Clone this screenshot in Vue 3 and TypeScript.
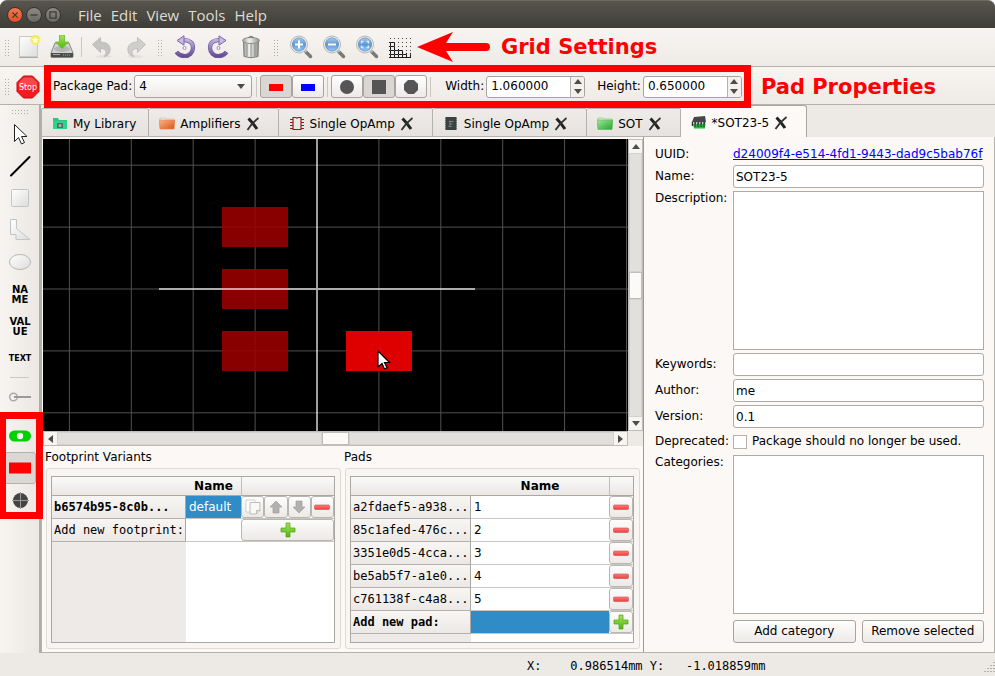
<script setup lang="ts">
import { ref } from 'vue'

interface Tab { title: string; icon: string; closable: boolean }
interface Pad { id: string; name: string }

const menus = ['File', 'Edit', 'View', 'Tools', 'Help']

const tabs: Tab[] = [
  { title: 'My Library', icon: 'library', closable: false },
  { title: 'Amplifiers', icon: 'orange', closable: true },
  { title: 'Single OpAmp', icon: 'symbol', closable: true },
  { title: 'Single OpAmp', icon: 'component', closable: true },
  { title: 'SOT', icon: 'green', closable: true },
  { title: '*SOT23-5', icon: 'package', closable: true },
]
const activeTab = ref(5)

const pads: Pad[] = [
  { id: 'a2fdaef5-a938...', name: '1' },
  { id: '85c1afed-476c...', name: '2' },
  { id: '3351e0d5-4cca...', name: '3' },
  { id: 'be5ab5f7-a1e0...', name: '4' },
  { id: 'c761138f-c4a8...', name: '5' },
]

const packagePad = ref('4')
const padWidth = ref('1.060000')
const padHeight = ref('0.650000')
const name = ref('SOT23-5')
const description = ref('')
const keywords = ref('')
const author = ref('me')
const version = ref('0.1')
const deprecated = ref(false)
const coordinates = 'X:    0.986514mm Y:   -1.018859mm'

const gridStep = 61.9
const gridX = [-4, -3, -2, -1, 1, 2, 3, 4, 5].map((n) => n * gridStep)
const gridY = [-2, -1, 0, 1, 2].map((n) => n * gridStep)
const leftPadRows = [-82, -20, 42]

function step(value: string, delta: number): string {
  return (Number(value) + delta).toFixed(6)
}
</script>

<template>
  <div class="window">
    <svg class="defs" width="0" height="0" aria-hidden="true">
      <defs>
        <linearGradient id="paper" x1="0" y1="0" x2="1" y2="1">
          <stop offset="0" stop-color="#ffffff" /><stop offset="1" stop-color="#dcdedb" />
        </linearGradient>
        <linearGradient id="metal" x1="0" y1="0" x2="1" y2="0">
          <stop offset="0" stop-color="#9b9d98" /><stop offset=".4" stop-color="#f2f3f0" /><stop offset="1" stop-color="#8f918c" />
        </linearGradient>
        <linearGradient id="greenFill" x1="0" y1="0" x2="0" y2="1">
          <stop offset="0" stop-color="#a5e55c" /><stop offset="1" stop-color="#4fb80d" />
        </linearGradient>
        <linearGradient id="purple" x1="0" y1="0" x2="0" y2="1">
          <stop offset="0" stop-color="#c0b2dc" /><stop offset="1" stop-color="#644e96" />
        </linearGradient>
        <linearGradient id="lens" x1="0" y1="0" x2="0" y2="1">
          <stop offset="0" stop-color="#a9caec" /><stop offset=".5" stop-color="#5c97d6" /><stop offset="1" stop-color="#9ccaf4" />
        </linearGradient>
        <linearGradient id="orangeFill" x1="0" y1="0" x2="1" y2="1">
          <stop offset="0" stop-color="#f6b98a" /><stop offset="1" stop-color="#dd5310" />
        </linearGradient>
        <linearGradient id="folderGreen" x1="0" y1="0" x2="1" y2="1">
          <stop offset="0" stop-color="#a2e79d" /><stop offset="1" stop-color="#23a32a" />
        </linearGradient>
        <linearGradient id="redFill" x1="0" y1="0" x2="0" y2="1">
          <stop offset="0" stop-color="#ff7b7b" /><stop offset="1" stop-color="#f23c3c" />
        </linearGradient>
      </defs>
    </svg>

    <header class="titlebar">
      <div class="controls">
        <button class="control close" aria-label="Close">
          <svg viewBox="0 0 16 16"><path d="M5 5l6 6m0-6l-6 6" /></svg>
        </button>
        <button class="control" aria-label="Minimize">
          <svg viewBox="0 0 16 16"><path d="M4 8h8" /></svg>
        </button>
        <button class="control" aria-label="Maximize">
          <svg viewBox="0 0 16 16"><path d="M4.500 4.500h7v7h-7z" /></svg>
        </button>
      </div>
      <nav class="menu">
        <button v-for="m in menus" :key="m">{{ m }}</button>
      </nav>
    </header>

    <div class="toolbar main-tools">
      <span class="grip first"></span>
      <button class="tool" aria-label="New">
        <svg viewBox="0 0 24 24">
          <path d="M2.500 1.500h18v20h-18z" fill="url(#paper)" stroke="#c9c9c6" />
          <path d="M2 22.500h19" stroke="#a9aaa6" />
          <circle cx="18.500" cy="5" r="5" fill="#f6ee3c" opacity=".75" />
          <path d="M18.500 1.500l1 2.300 2.500.2-1.800 1.700.6 2.600-2.300-1.400-2.300 1.400.6-2.600L15 4l2.500-.2z" fill="#fffde0" />
        </svg>
      </button>
      <button class="tool" aria-label="Save">
        <svg viewBox="0 0 24 24">
          <path d="M5 8h14l4 10v4H1v-4z" fill="#d2d3d0" stroke="#858783" />
          <path d="M1 18h22v3.500q0 1-1 1H2q-1 0-1-1z" fill="#4c4e4c" />
          <path d="M3 19.500h7" stroke="#a7a9a6" /><path d="M13 20h8" stroke="#777" stroke-dasharray="1 1" stroke-width="2" />
          <ellipse cx="12" cy="14" rx="8" ry="3" fill="#b5b7b4" />
          <path d="M9.500 0h5v7h4L12 13.500 5.500 7h4z" fill="url(#greenFill)" stroke="#6cbb2c" stroke-width=".8" />
        </svg>
      </button>
      <span class="separator"></span>
      <button class="tool" aria-label="Undo">
        <svg viewBox="0 0 24 24">
          <ellipse cx="14" cy="21.500" rx="8" ry="1.500" fill="#e3e0dd" />
          <path d="M2.500 9.500l8-7v4.500c7 0 10.500 4 9.500 9-.5 3-2.500 5-6 5.500 3.500-3.500 2.500-8-3.500-8v4z" fill="#c5c4c2" stroke="#b7b6b4" stroke-width=".8" />
        </svg>
      </button>
      <button class="tool" aria-label="Redo">
        <svg viewBox="0 0 24 24">
          <ellipse cx="12" cy="21.500" rx="8" ry="1.500" fill="#e3e0dd" />
          <path d="M22.500 9.500l-8-7v4.500C7.500 7 4 11 5 16c.5 3 2.500 5 6 5.500-3.500-3.500-2.500-8 3.500-8v4z" fill="#d0cfcd" stroke="#b7b6b4" stroke-width=".8" />
        </svg>
      </button>
      <span class="grip"></span>
      <button class="tool" aria-label="Rotate counterclockwise">
        <svg viewBox="0 0 24 24">
          <path d="M10 5.200C17 4.500 20.200 8.500 20 13c-.2 5-4 8-8 8-4 0-6.500-1-8.500-4" fill="none" stroke="#6b569f" stroke-width="4.200" />
          <path d="M10 5.200C17 4.500 20.200 8.500 20 13c-.2 5-4 8-8 8-4 0-6.500-1-8.500-4" fill="none" stroke="url(#purple)" stroke-width="3" />
          <path d="M4 5.500L11 .8v9.400z" fill="#c6bae0" stroke="#7c68ac" />
          <circle cx="11.500" cy="13" r="1.500" fill="#fff" stroke="#9a8ac0" />
        </svg>
      </button>
      <button class="tool" aria-label="Rotate clockwise">
        <svg viewBox="0 0 24 24">
          <path d="M14 5.200C7 4.500 3.800 8.500 4 13c.2 5 4 8 8 8 4 0 6.500-1 8.500-4" fill="none" stroke="#6b569f" stroke-width="4.200" />
          <path d="M14 5.200C7 4.500 3.800 8.500 4 13c.2 5 4 8 8 8 4 0 6.500-1 8.500-4" fill="none" stroke="url(#purple)" stroke-width="3" />
          <path d="M20 5.500L13 .8v9.400z" fill="#c6bae0" stroke="#7c68ac" />
          <circle cx="12.500" cy="13" r="1.500" fill="#fff" stroke="#9a8ac0" />
        </svg>
      </button>
      <button class="tool" aria-label="Delete">
        <svg viewBox="0 0 24 24">
          <path d="M4.500 6h15l-.5 15.500q-7 2.500-14 0z" fill="url(#metal)" stroke="#7d7f7b" />
          <path d="M8 9v12M12 9v13M16 9v12" stroke="#8b8d89" />
          <ellipse cx="12" cy="5.500" rx="8.500" ry="3" fill="url(#metal)" stroke="#8a8c88" />
          <path d="M9.500 3q2.500-3 5 0" fill="none" stroke="#80827e" stroke-width="1.500" />
        </svg>
      </button>
      <span class="grip"></span>
      <button v-for="z in ['in', 'out', 'all']" :key="z" class="tool" :aria-label="'Zoom ' + z">
        <svg viewBox="0 0 24 24">
          <path d="M17 17l4.500 4.500" stroke="#777a75" stroke-width="3.500" stroke-linecap="round" />
          <path d="M15 14.500l2.500 2.500" stroke="#bbb" stroke-width="2" />
          <circle cx="10" cy="9.500" r="8.500" fill="#eeeeec" stroke="#b5b7b3" />
          <circle cx="10" cy="9.500" r="6.600" fill="url(#lens)" stroke="#5b8cc2" stroke-width=".8" />
          <path v-if="z === 'in'" d="M6 9.500h8M10 5.500v8" stroke="#fff" stroke-width="2" />
          <path v-else-if="z === 'out'" d="M6 9.500h8" stroke="#fff" stroke-width="2" />
          <path v-else d="M6.500 8.500v-2h2M11.500 6.500h2v2M13.500 10.500v2h-2M8.500 12.500h-2v-2" fill="none" stroke="#dceafa" stroke-width="1.300" />
        </svg>
      </button>
      <button class="tool" aria-label="Grid settings">
        <svg viewBox="0 0 24 24" fill="none" stroke="#1c1c1c">
          <path d="M2.500 7v16M6.500 7v16M10.500 14v9M14.500 15v8M18.500 18v5M22.500 18v5M1 7.500h6M1 11.500h6M1 15.500h14M1 19.500h18M1 22.500h22" />
          <path d="M2 3.500h21M2 7.500h21M2 11.500h21M2 15.500h21M2 19.500h21" stroke="#444" stroke-dasharray="1 3" />
        </svg>
      </button>
      <svg class="callout-arrow" viewBox="0 0 74 30" aria-hidden="true">
        <path d="M0 15L36 0l-7 11h40q4 0 4 4t-4 4H29l7 11z" fill="#f00" />
      </svg>
      <strong class="callout">Grid Settings</strong>
    </div>

    <div class="toolbar pad-tools">
      <span class="grip first"></span>
      <button class="tool stop" aria-label="Stop">
        <svg viewBox="0 0 24 24">
          <path d="M7.500 1h9L23 7.500v9L16.500 23h-9L1 16.500v-9z" fill="#f31b1f" stroke="#b31216" />
          <path d="M8 2.500h8l5 5v4Q12 11 3 14V7.500z" fill="#ff6d6d" opacity=".55" />
          <text x="12" y="15" text-anchor="middle">Stop</text>
        </svg>
      </button>
      <div class="properties">
        <label for="package-pad">Package Pad:</label>
        <div class="combo">
          <select id="package-pad" v-model="packagePad">
            <option v-for="p in pads" :key="p.id">{{ p.name }}</option>
          </select>
          <svg viewBox="0 0 8 5"><path d="M0 0h8L4 5z" /></svg>
        </div>
        <span class="separator"></span>
        <div class="segments">
          <button class="pressed" aria-label="Top side"><svg viewBox="0 0 16 16"><path d="M1 5h14v7H1z" fill="#f00" /></svg></button>
          <button aria-label="Bottom side"><svg viewBox="0 0 16 16"><path d="M1 5h14v7H1z" fill="#00f" /></svg></button>
        </div>
        <span class="separator"></span>
        <div class="segments">
          <button aria-label="Round"><svg viewBox="0 0 16 16"><circle cx="8" cy="8" r="7" fill="#555" /></svg></button>
          <button class="pressed" aria-label="Rectangular"><svg viewBox="0 0 16 16"><path d="M1 1h14v14H1z" fill="#555" /></svg></button>
          <button aria-label="Octagonal"><svg viewBox="0 0 16 16"><path d="M5 1h6l4 4v6l-4 4H5l-4-4V5z" fill="#555" /></svg></button>
        </div>
        <span class="separator"></span>
        <label class="spaced" for="pad-width">Width:</label>
        <div class="spin">
          <input id="pad-width" v-model="padWidth" type="text" />
          <div class="arrows">
            <button aria-label="Increase width" @click="padWidth = step(padWidth, 0.1)"><svg viewBox="0 0 8 5"><path d="M0 5h8L4 0z" /></svg></button>
            <button aria-label="Decrease width" @click="padWidth = step(padWidth, -0.1)"><svg viewBox="0 0 8 5"><path d="M0 0h8L4 5z" /></svg></button>
          </div>
        </div>
        <label class="spaced" for="pad-height">Height:</label>
        <div class="spin">
          <input id="pad-height" v-model="padHeight" type="text" />
          <div class="arrows">
            <button aria-label="Increase height" @click="padHeight = step(padHeight, 0.1)"><svg viewBox="0 0 8 5"><path d="M0 5h8L4 0z" /></svg></button>
            <button aria-label="Decrease height" @click="padHeight = step(padHeight, -0.1)"><svg viewBox="0 0 8 5"><path d="M0 0h8L4 5z" /></svg></button>
          </div>
        </div>
      </div>
      <strong class="callout">Pad Properties</strong>
    </div>

    <div class="body">
      <aside class="side-tools">
        <span class="side-grip"></span>
        <button aria-label="Select"><svg viewBox="0 0 24 24"><path d="M6.500 2.500v17l4-4 3 6.500 3-1.500-3-6h5.500z" fill="#fff" stroke="#222" /></svg></button>
        <button aria-label="Draw line"><svg viewBox="0 0 24 24"><path d="M3 21.500L21.500 3" stroke="#000" stroke-width="2" stroke-linecap="round" /></svg></button>
        <button aria-label="Draw rectangle"><svg viewBox="0 0 24 24"><rect x="3.500" y="3.500" width="17" height="17" rx="1" fill="url(#paper)" stroke="#c3c4c6" /></svg></button>
        <button aria-label="Draw polygon"><svg viewBox="0 0 24 24"><path d="M2.500 1.500h6v9l13.500 11H8v-5H2.500z" fill="url(#paper)" stroke="#c3c4c6" /></svg></button>
        <button aria-label="Draw ellipse"><svg viewBox="0 0 24 24"><ellipse cx="12" cy="12" rx="10.500" ry="7.500" fill="url(#paper)" stroke="#b5b6b7" /></svg></button>
        <button class="word">NA<br />ME</button>
        <button class="word">VAL<br />UE</button>
        <button class="word small">TEXT</button>
        <span class="side-separator"></span>
        <button aria-label="Add pin"><svg viewBox="0 0 24 24"><circle cx="5.500" cy="12" r="3.800" fill="none" stroke="#aaa" stroke-width="1.500" /><path d="M6 12h17" stroke="#999" stroke-width="2" /></svg></button>
        <span class="side-separator"></span>
        <button aria-label="Add THT pad"><svg viewBox="0 0 24 24"><rect x="1" y="6.500" width="22" height="11" rx="5.500" fill="#00d100" /><circle cx="12" cy="12" r="3.200" fill="#f4f1ee" /></svg></button>
        <button class="pressed" aria-label="Add SMT pad"><svg viewBox="0 0 24 24"><path d="M1 6.500h22v11H1z" fill="#f00" /></svg></button>
        <button aria-label="Add hole"><svg viewBox="0 0 24 24"><circle cx="12.500" cy="12.500" r="7.500" fill="#444" /><path d="M12.500 4v17M4 12.500h17" stroke="#999" /></svg></button>
        <span class="frame"></span>
      </aside>

      <main class="workspace">
        <div class="tabs" role="tablist">
          <div v-for="(t, i) in tabs" :key="i" class="tab" :class="{ active: i === activeTab }" role="tab" @click="activeTab = i">
            <svg v-if="t.icon === 'library'" viewBox="0 0 16 16"><path d="M1 2h5l1 2h8v2H1z" fill="#2dc585" /><path d="M1 5h14v8H1z" fill="#2bd68a" /><path d="M5 7h6v5H5z" fill="#586a62" /><circle cx="8" cy="9.500" r="1.500" fill="#a7b5ad" /></svg>
            <svg v-else-if="t.icon === 'orange'" viewBox="0 0 16 16"><path d="M1 2h5l1 1h8v3H1z" fill="#eee" stroke="#ccb9ac" stroke-width=".6" /><path d="M0 4h16l-1 9H1z" fill="url(#orangeFill)" stroke="#e28250" stroke-width=".6" /></svg>
            <svg v-else-if="t.icon === 'green'" viewBox="0 0 16 16"><path d="M1 2h5l1 1h8v3H1z" fill="#d7eed5" stroke="#7ac378" stroke-width=".6" /><path d="M0 4h16l-1 9.500H1z" fill="url(#folderGreen)" stroke="#58b957" stroke-width=".6" /></svg>
            <svg v-else-if="t.icon === 'symbol'" viewBox="0 0 16 16" fill="none" stroke="#8e1f1f"><path d="M4 1.500h3q1 1.500 2 0h3v12H4z" stroke-width="1.200" /><path d="M1 3.500h3M1 6.500h3M1 9.500h3M1 12.500h3M12 3.500h3M12 6.500h3M12 9.500h3M12 12.500h3" /></svg>
            <svg v-else-if="t.icon === 'component'" viewBox="0 0 16 16"><path d="M2.500 1h11v13h-11z" fill="#3a4242" /><path d="M2.500 2v12M13.500 2v12" stroke="#69706f" stroke-dasharray="1 1" /><path d="M6 5.500h4.500M6.500 8h3M7 4.500v5.500M5.500 10.500h3" stroke="#889090" stroke-width=".8" fill="none" /></svg>
            <svg v-else viewBox="0 0 16 16"><path d="M3 2l11-1 1 6H1z" fill="#454847" /><path d="M1.500 7v4M4.500 7v4M7.500 7v4M10.500 7v4M13.500 7v4" stroke="#333" stroke-width="1.500" /><path d="M2 9h12v4.500H3z" fill="#13c32b" /><path d="M4 7v5M7 7v5M10 7v5M13 7v5" stroke="#3c4240" stroke-width="1.300" /></svg>
            <span>{{ t.title }}</span>
            <button v-if="t.closable" class="tab-close" aria-label="Close tab"><svg viewBox="0 0 14 14"><path d="M2.500 1.500Q7 6 11 12" stroke="#222" stroke-width="3" fill="none" /><path d="M12.500 1Q6 6 1.500 13" stroke="#333" stroke-width="1.800" fill="none" /></svg></button>
          </div>
        </div>

        <div class="pane">
          <section class="editor">
            <div class="canvas-area">
              <svg class="canvas" viewBox="-274 -150 585 292" preserveAspectRatio="xMidYMid slice" role="img" aria-label="Footprint">
                <rect x="-1000" y="-1000" width="2000" height="2000" fill="#000" />
                <g stroke="#515151" stroke-width="1">
                  <path v-for="x in gridX" :key="'x' + x" :d="`M${x} -900V900`" />
                  <path v-for="y in gridY" :key="'y' + y" :d="`M-900 ${y}H900`" />
                </g>
                <rect v-for="y in leftPadRows" :key="y" x="-95" :y="y" width="66" height="40" fill="#9c0000" fill-opacity=".88" />
                <rect x="29" y="42" width="66" height="40" fill="#e20000" fill-opacity=".98" />
                <path d="M0 -900V900M-158 0H158" stroke="#fff" stroke-opacity=".62" stroke-width="2" />
                <path d="M61 62v16l4-3.500 2.500 5.500 2.500-1.200-2.500-5.300h5z" fill="#fff" stroke="#000" stroke-width="1.200" />
              </svg>
              <div class="scroll vertical">
                <span class="scroll-button"><svg viewBox="0 0 8 5"><path d="M0 5h8L4 0z" /></svg></span>
                <span class="track"></span><span class="thumb"></span><span class="track"></span>
                <span class="scroll-button"><svg viewBox="0 0 8 5"><path d="M0 0h8L4 5z" /></svg></span>
              </div>
              <div class="scroll horizontal">
                <span class="scroll-button"><svg class="tall" viewBox="0 0 5 8"><path d="M5 0v8L0 4z" /></svg></span>
                <span class="track"></span><span class="thumb"></span><span class="track"></span>
                <span class="scroll-button"><svg class="tall" viewBox="0 0 5 8"><path d="M0 0v8l5-4z" /></svg></span>
              </div>
              <span class="corner"></span>
            </div>

            <div class="lists">
              <section class="group">
                <h2>Footprint Variants</h2>
                <div class="group-box">
                  <div class="table-box variants">
                    <table>
                      <colgroup><col class="id" /><col class="label" /><col /></colgroup>
                      <thead><tr><th></th><th>Name</th><th></th></tr></thead>
                      <tbody>
                        <tr>
                          <th class="bold">b6574b95-8c0b...</th>
                          <td class="selected">default</td>
                          <td class="actions"><div>
                            <button aria-label="Copy"><svg viewBox="0 0 16 16"><path d="M1 1h9v12H1z" fill="#fff" stroke="#c6c6c3" stroke-width=".8" /><path d="M5 3.500h10v8l-3.500 3.500H5z" fill="#f8f8f7" stroke="#bdbdba" /><path d="M15 11.500h-3.500V15" fill="#ddd" stroke="#bbb" /></svg></button>
                            <button aria-label="Up"><svg viewBox="0 0 16 16"><path d="M8 2l6 6h-3v6H5V8H2z" fill="#b2b1af" stroke="#a2a19f" stroke-width=".7" /></svg></button>
                            <button aria-label="Down"><svg viewBox="0 0 16 16"><path d="M8 14l6-6h-3V2H5v6H2z" fill="#b2b1af" stroke="#a2a19f" stroke-width=".7" /></svg></button>
                            <button aria-label="Remove"><svg viewBox="0 0 16 16"><rect x=".5" y="6" width="15" height="4.500" rx="1" fill="url(#redFill)" stroke="#c95050" stroke-width=".6" /></svg></button>
                          </div></td>
                        </tr>
                        <tr>
                          <th>Add new footprint:</th>
                          <td></td>
                          <td class="actions"><div>
                            <button aria-label="Add footprint"><svg viewBox="0 0 16 16"><path d="M6 1h4v5h5v4h-5v5H6v-5H1V6h5z" fill="url(#greenFill)" stroke="#4ea013" stroke-width=".7" /></svg></button>
                          </div></td>
                        </tr>
                      </tbody>
                    </table>
                  </div>
                </div>
              </section>

              <section class="group">
                <h2>Pads</h2>
                <div class="group-box">
                  <div class="table-box pads">
                    <table>
                      <colgroup><col class="id" /><col /><col class="action" /></colgroup>
                      <thead><tr><th></th><th>Name</th><th></th></tr></thead>
                      <tbody>
                        <tr v-for="p in pads" :key="p.id">
                          <th>{{ p.id }}</th>
                          <td>{{ p.name }}</td>
                          <td class="actions"><div>
                            <button :aria-label="'Remove pad ' + p.name"><svg viewBox="0 0 16 16"><rect x=".5" y="6" width="15" height="4.500" rx="1" fill="url(#redFill)" stroke="#c95050" stroke-width=".6" /></svg></button>
                          </div></td>
                        </tr>
                        <tr>
                          <th class="bold">Add new pad:</th>
                          <td class="selected"></td>
                          <td class="actions"><div>
                            <button aria-label="Add pad"><svg viewBox="0 0 16 16"><path d="M6 1h4v5h5v4h-5v5H6v-5H1V6h5z" fill="url(#greenFill)" stroke="#4ea013" stroke-width=".7" /></svg></button>
                          </div></td>
                        </tr>
                      </tbody>
                    </table>
                  </div>
                </div>
              </section>
            </div>
          </section>

          <form class="details" @submit.prevent>
            <span class="caption">UUID:</span>
            <a href="#">d24009f4-e514-4fd1-9443-dad9c5bab76f</a>
            <label for="name">Name:</label>
            <input id="name" v-model="name" type="text" />
            <label class="top" for="description">Description:</label>
            <textarea id="description" v-model="description"></textarea>
            <label for="keywords">Keywords:</label>
            <input id="keywords" v-model="keywords" type="text" />
            <label for="author">Author:</label>
            <input id="author" v-model="author" type="text" />
            <label for="version">Version:</label>
            <input id="version" v-model="version" type="text" />
            <span class="caption">Deprecated:</span>
            <label class="check"><input v-model="deprecated" type="checkbox" />Package should no longer be used.</label>
            <label class="top" for="categories">Categories:</label>
            <select id="categories" multiple></select>
            <div class="form-buttons">
              <button type="button">Add category</button>
              <button type="button">Remove selected</button>
            </div>
          </form>
        </div>
      </main>
    </div>

    <footer class="statusbar">
      <span>{{ coordinates }}</span>
      <svg viewBox="0 0 12 12"><path d="M10 1.500h2M7 4.500h2M10 4.500h2M4 7.500h2M7 7.500h2M10 7.500h2M1 10.500h2M4 10.500h2M7 10.500h2M10 10.500h2" stroke="#b5b1ad" /></svg>
    </footer>
  </div>
</template>

<style>
body { margin: 0; background: #fff; }
</style>

<style scoped>
* { box-sizing: border-box; }
.window {
  display: flex;
  flex-direction: column;
  min-height: 100vh;
  background: #edeae6;
  border-radius: 7px 7px 0 0;
  color: #000;
  font: 12px/15px "DejaVu Sans", sans-serif;
}
.defs { position: absolute; }
svg { display: block; flex: none; }
button, input, select, textarea { margin: 0; font: inherit; color: inherit; }
button { display: flex; align-items: center; justify-content: center; padding: 0; border: 0; background: none; }

.titlebar {
  display: flex;
  align-items: center;
  gap: 17px;
  height: 28px;
  padding: 1px 7px 0;
  border-top: 1px solid #6b6961;
  border-radius: 7px 7px 0 0;
  background: linear-gradient(#57554d, #3e3d38);
}
.controls { display: flex; gap: 3px; }
.control { width: 16px; height: 16px; border: 1px solid #34332f; border-radius: 50%; background: linear-gradient(#8d8a82, #6b6963); }
.control svg { width: 14px; height: 14px; fill: none; stroke: #3c3b37; stroke-width: 1.5; }
.control.close { background: linear-gradient(#f7774f, #e25022); }
.menu { display: flex; gap: 9px; }
.menu button { color: #dfdbd2; font: 15px/20px "Open Sans", "Noto Sans", sans-serif; }

.toolbar {
  display: flex;
  align-items: center;
  border-bottom: 1px solid #b5b1ad;
  background: linear-gradient(#f7f4f1, #eeebe7);
}
.main-tools { height: 39px; }
.pad-tools { height: 38px; padding-top: 2px; }
.grip { width: 17px; height: 17px; display: flex; justify-content: center; }
.grip.first { width: 12px; }
.grip::before, .side-grip::before {
  content: "";
  width: 5px;
  background: radial-gradient(circle, #b0aca8 0 1px, transparent 1px) 0 0 / 3px 3px;
}
.tool { width: 33px; height: 32px; }
.tool svg { width: 24px; height: 24px; }
.separator { width: 7px; height: 20px; border-right: 3px solid transparent; border-left: 3px solid transparent; background: #cac6c2; background-clip: padding-box; }
.callout { color: #f00; font-size: 21px; line-height: 26px; }
.callout-arrow { width: 74px; height: 30px; margin-left: 1px; margin-right: 10px; }
.tool.stop { width: 32px; }
.stop text { fill: #fff; font-size: 8px; }
.pad-tools .callout { margin-left: 10px; }
.properties {
  position: relative;
  display: flex;
  align-items: center;
  gap: 2px;
  padding: 0 9px;
}
.properties .separator { width: 5px; border-width: 0 2px; }
.properties::after {
  content: "";
  position: absolute;
  inset: -10px 0;
  z-index: 2;
  border: 7px solid #f00;
  pointer-events: none;
}
.combo { display: grid; align-items: center; width: 118px; }
.combo select {
  grid-area: 1 / 1;
  height: 23px;
  padding: 0 4px;
  border: 1px solid #a7a39f;
  border-radius: 3px;
  appearance: none;
  background: linear-gradient(#fefefe, #eeebe8);
}
.combo svg { grid-area: 1 / 1; justify-self: end; width: 8px; height: 5px; margin-right: 7px; pointer-events: none; }
.segments { display: flex; margin: 0 -1px; }
.segments button { width: 32px; height: 23px; border: 1px solid #a7a39f; border-radius: 3px; background: linear-gradient(#fff, #edeae7); }
.segments .pressed { background: #dad6d3; }
.segments svg { width: 16px; height: 16px; }
.spaced { margin-left: 10px; }
.spin { display: flex; width: 99px; height: 22px; overflow: hidden; border: 1px solid #a7a39f; border-radius: 3px; background: #fff; }
.spin input { flex: 1; min-width: 0; padding: 0 4px; border: 0; outline: 0; background: none; }
.arrows { display: grid; grid-template-rows: 1fr 1fr; width: 14px; border-left: 1px solid #b5b1ad; background: #f3f0ed; }
.combo svg, .arrows svg, .scroll svg { fill: #4d4d4a; }
.arrows svg { width: 8px; height: 5px; }

.body { display: flex; flex: 1; }
.side-tools {
  position: relative;
  display: flex;
  flex-direction: column;
  width: 41px;
  padding: 1px 0;
  border-right: 2px solid #b0aca8;
  background: linear-gradient(90deg, #f7f4f1, #ebe8e4);
}
.side-grip { display: flex; justify-content: center; height: 12px; padding: 3px 0; }
.side-grip::before { width: 17px; }
.side-tools button { height: 32px; margin: 0 3px 0 4px; border: 1px solid transparent; border-radius: 3px; }
.side-tools .pressed { border-color: #b5b1ad; background: #dbd7d4; }
.side-tools svg { width: 24px; height: 24px; }
.side-tools .word { padding-top: 2px; font-weight: bold; font-size: 10px; line-height: 10px; }
.side-tools .small { font-size: 8px; }
.side-separator { height: 1px; margin: 3px 10px; background: #cac6c2; }
.frame {
  position: absolute;
  top: 307px;
  left: 0;
  z-index: 2;
  width: 43px;
  height: 107px;
  border: 7px solid #f00;
  border-left-width: 6px;
  pointer-events: none;
}

.workspace { display: flex; flex: 1; flex-direction: column; min-width: 0; }
.tabs { display: flex; align-items: flex-end; height: 32px; }
.tab {
  display: flex;
  align-items: center;
  gap: 5px;
  height: 29px;
  padding: 3px 12px 0 10px;
  border: 1px solid #b5b1ad;
  border-left-width: 0;
  border-radius: 2px 2px 0 0;
  background: linear-gradient(#eeebe8, #e6e2df);
}
.tab svg { width: 16px; height: 16px; }
.tab:first-child { border-left-width: 1px; }
.tab.active { height: 32px; border-bottom: 0; border-color: #aaa6a2; border-radius: 3px 3px 0 0; background: #fcf9f6; }
.tab-close { margin-right: 6px; }
.tab .tab-close svg { width: 14px; height: 14px; }

.pane { display: flex; flex: 1; border: 1px solid #b5b1ad; border-top: 0; background: #fcf8f5; }
.editor { display: flex; flex: 1; flex-direction: column; min-width: 0; padding: 2px 0 3px 1px; border-right: 1px solid #9d9995; }
.canvas-area { display: grid; flex: 1; grid-template: minmax(0, 1fr) 15px / minmax(0, 1fr) 15px; min-height: 200px; }
.canvas { width: 100%; height: 0; min-height: 100%; background: #000; }
.scroll { display: flex; border: 1px solid #c0bcb8; background: #e2e0dc; }
.scroll.vertical { flex-direction: column; }
.scroll-button { display: flex; align-items: center; justify-content: center; width: 13px; height: 13px; background: #f7f5f2; }
.scroll-button svg { width: 8px; height: 5px; }
.scroll-button .tall { width: 5px; height: 8px; }
.track { flex: 1; box-shadow: inset 0 0 0 1px #d5d2ce; }
.thumb { flex: 0 0 27px; border: 1px solid #c0bcb8; background: #fbfaf8; }
.corner { background: #edeae6; }

.lists { display: grid; grid-template-columns: 1fr 1fr; gap: 4px; padding: 0 3px; }
.group h2 { margin: 0 -1px; padding: 4px 0 3px; font-size: 12px; font-weight: normal; line-height: 15px; }
.group-box { padding: 7px 5px 5px 4px; border: 1px solid #dedad6; border-radius: 3px; background: #f9f5f2; }
.table-box { min-height: 167px; border: 1px solid #aba7a3; }
.variants { background: linear-gradient(90deg, #edeae7 134px, #fff 134px); }
.pads { background: linear-gradient(90deg, #edeae7 120px, #fff 120px); }
table { width: 100%; border-spacing: 0; table-layout: fixed; }
.variants .id { width: 134px; }
.variants .label { width: 55px; }
.pads .id { width: 120px; }
.pads .action { width: 24px; }
th, td { height: 23px; padding: 0 3px; border-bottom: 1px solid #b5b1ad; text-align: left; white-space: nowrap; }
td { background: #fff; border-bottom-color: #c9c6c3; }
thead th { height: 19px; padding: 0; border-bottom-color: #aba7a3; background: linear-gradient(#fafafa, #eae7e4); text-align: center; }
thead th:last-child { border-left: 1px solid #c0bcb8; }
tbody th { padding: 0 2px; border-right: 1px solid #aba7a3; background: linear-gradient(#f8f6f4, #ebe8e5); font: 12px/15px "DejaVu Sans Mono", monospace; }
tbody .bold { font-weight: bold; }
.selected { background: #308cc6; color: #fff; }
.actions { padding: 0; }
.actions div { display: flex; height: 22px; }
.actions button { flex: 1; border: 1px solid #b9b5b1; border-radius: 3px; background: linear-gradient(#fdfdfd, #ece9e6); }
.actions svg { width: 16px; height: 16px; }

.details {
  display: grid;
  flex: 0 1 350px;
  grid-template-columns: 76px minmax(0, 1fr);
  grid-template-rows: 15px 23px minmax(60px, 1fr) 23px 23px 23px 21px minmax(60px, 1fr) 26px;
  align-items: center;
  gap: 3px 2px;
  padding: 10px 10px 9px 11px;
}
.details a { color: #00f; white-space: nowrap; }
.details label, .caption { white-space: nowrap; }
.details .top { align-self: start; }
.details > input, .details textarea, .details > select {
  width: 100%;
  height: 100%;
  padding: 0 2px;
  border: 1px solid #aeaaa6;
  border-radius: 3px;
  outline: 0;
  background: #fff;
}
.details textarea, .details > select { border-radius: 0; resize: none; overflow: hidden; }
.details > select { appearance: none; }
.check { display: flex; align-items: center; gap: 5px; }
.check input { width: 14px; height: 14px; border: 1px solid #b5b1ad; appearance: none; background: #fff; }
.form-buttons { display: flex; grid-column: 2; align-self: end; gap: 6px; }
.form-buttons button { flex: 1; height: 23px; border: 1px solid #a7a39f; border-radius: 3px; background: linear-gradient(#fefefe, #edeae7); white-space: nowrap; }

.statusbar { display: flex; align-items: center; height: 23px; padding: 4px 0 0 527px; font-family: "DejaVu Sans Mono", monospace; }
.statusbar span { white-space: pre; }
.statusbar svg { width: 12px; height: 12px; margin-left: auto; }
</style>
